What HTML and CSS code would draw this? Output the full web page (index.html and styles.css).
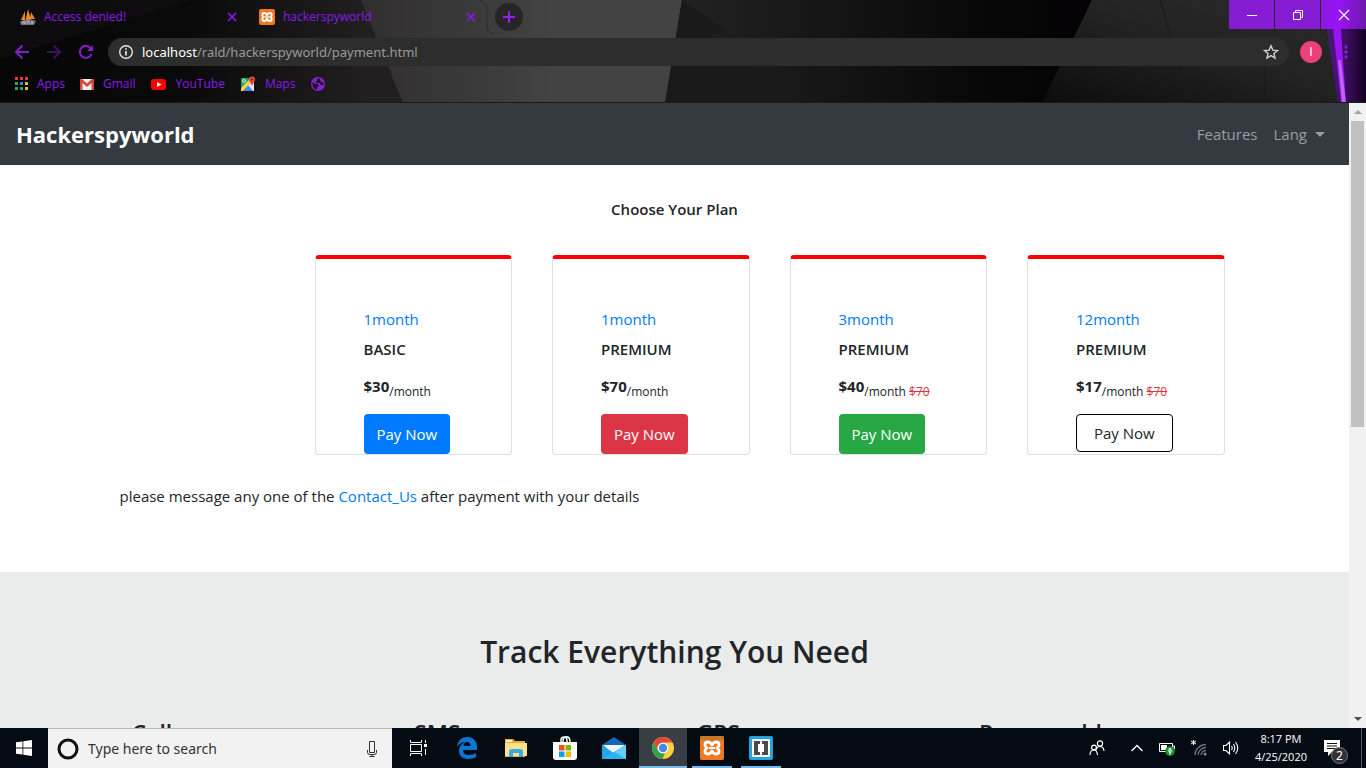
FILE: index.html
```html
<!DOCTYPE html>
<html lang="en">
<head>
<meta charset="utf-8">
<title>hackerspyworld</title>
<link rel="stylesheet" href="styles.css">
</head>
<body class="desktop">
<header class="browser">
  <svg class="theme" viewBox="0 0 1366 103" preserveAspectRatio="none" aria-hidden="true">
    <defs>
      <linearGradient id="base"><stop offset="0" stop-color="#070607"/><stop offset=".14" stop-color="#0b0a0b"/><stop offset=".27" stop-color="#211f20"/></linearGradient>
      <linearGradient id="mid"><stop offset="0" stop-color="#302e2f"/><stop offset=".6" stop-color="#434343"/><stop offset="1" stop-color="#434343"/></linearGradient>
      <linearGradient id="dark"><stop offset="0" stop-color="#222"/><stop offset=".7" stop-color="#080808"/><stop offset="1" stop-color="#040204"/></linearGradient>
      <linearGradient id="right" x1="0" y1="1" x2="1" y2="0"><stop offset="0" stop-color="#0c0c0c"/><stop offset=".5" stop-color="#222"/><stop offset="1" stop-color="#2c2c2c"/></linearGradient>
      <linearGradient id="glow"><stop offset="0" stop-color="#6b0fb5" stop-opacity="0"/><stop offset=".25" stop-color="#5a0d99" stop-opacity=".7"/><stop offset="1" stop-color="#150020"/></linearGradient>
    </defs>
    <rect width="1366" height="103" fill="url(#base)"/>
    <path d="M0 59L190 0H0Z" fill="#121112" opacity=".6"/>
    <path d="M361 0H682L665 103H403Z" fill="url(#mid)"/>
    <path d="M682 0H1100V103H665Z" fill="#1a1a1a"/>
    <path d="M684 0H1100V103H802L710 34H730L690 5Z" fill="url(#dark)"/>
    <path d="M1092 0H1366V103H1042Z" fill="url(#right)"/>
    <path d="M1160 0L1190 103M1265 66V103" stroke="#191919" fill="none"/>
    <path d="M1322 0H1366V103H1338Z" fill="url(#glow)"/>
    <path d="M1330 0H1339L1346 103H1341Z" fill="#9b12f5"/>
    <path d="M1338 60L1341 60L1346 103H1342Z" fill="#bd62f0"/>
    <path d="M479 0Q487 2 487 9V26Q487 33 494 34" fill="none" stroke="#2c2c2c"/>
    <path d="M0 102.500H1366" stroke="#1a1a1c"/>
  </svg>
  <div class="tabstrip">
    <div class="tab tab-first">
      <svg class="i16" viewBox="0 0 16 16" aria-hidden="true"><path d="M1 11L5 2V11ZM5.500 11L8 0L11 11ZM10 10L11 3L15 10Z" fill="#e88b25"/><path d="M0 12.500Q8 9 16 12L14 16H1Z" fill="#71717c"/><path d="M3 15V12L5 15V12M7 15V12H9V15M11 15L12 12L13 15" stroke="#c9c9d2" fill="none" stroke-width=".7"/></svg>
      <span class="tab-title">Access denied!</span>
      <button class="bare" aria-label="Close tab"><svg class="i10" viewBox="0 0 10 10"><path d="M1 1L9 9M9 1L1 9" stroke="#8a19ed" stroke-width="1.700"/></svg></button>
    </div>
    <div class="tab">
      <svg class="i16" viewBox="0 0 24 24" aria-hidden="true"><rect width="24" height="24" rx="3" fill="#f07823"/><path d="M12 9C10 5 5 5 5 9Q5 11 7 12Q5 13 5 15C5 19 10 19 12 15C14 19 19 19 19 15Q19 13 17 12Q19 11 19 9C19 5 14 5 12 9Z" fill="none" stroke="#fff" stroke-width="3" stroke-linejoin="round"/><path d="M9 12H15" stroke="#fff" stroke-width="2"/></svg>
      <span class="tab-title">hackerspyworld</span>
      <button class="bare" aria-label="Close tab"><svg class="i10" viewBox="0 0 10 10"><path d="M1 1L9 9M9 1L1 9" stroke="#8a19ed" stroke-width="1.700"/></svg></button>
    </div>
    <button class="newtab" aria-label="New tab"><svg class="i12" viewBox="0 0 12 12"><path d="M6 0V12M0 6H12" stroke="#9420f5" stroke-width="2"/></svg></button>
    <div class="winbtns">
      <button class="winbtn" aria-label="Minimize"><svg class="i12" viewBox="0 0 12 12"><path d="M1 6.500H11" stroke="#fff"/></svg></button>
      <button class="winbtn" aria-label="Restore"><svg class="i12" viewBox="0 0 12 12"><path d="M1.500 3.500H8.500V10.500H1.500ZM3.500 3.500V1.500H10.500V8.500H8.500" fill="none" stroke="#fff"/></svg></button>
      <button class="winbtn winbtn-close" aria-label="Close"><svg class="i12" viewBox="0 0 12 12"><path d="M1 1L11 11M11 1L1 11" stroke="#fff" stroke-width="1.200"/></svg></button>
    </div>
  </div>
  <div class="toolbar">
    <button class="bare" aria-label="Back"><svg class="i16" viewBox="0 0 16 16"><path d="M15 8H2M8.500 1.500L2 8L8.500 14.500" fill="none" stroke="#8220cf" stroke-width="2"/></svg></button>
    <button class="bare" aria-label="Forward"><svg class="i16" viewBox="0 0 16 16"><path d="M1 8H14M7.500 1.500L14 8L7.500 14.500" fill="none" stroke="#3c105c" stroke-width="2"/></svg></button>
    <button class="bare" aria-label="Reload"><svg class="i16" viewBox="0 0 16 16"><path d="M13.500 10A6 6 0 1 1 12.500 4" fill="none" stroke="#8220cf" stroke-width="2"/><path d="M15 1V7H9Z" fill="#8220cf"/></svg></button>
    <div class="omnibox">
      <svg class="i16" viewBox="0 0 16 16" aria-hidden="true"><circle cx="8" cy="8" r="6.300" fill="none" stroke="#e4e4e4" stroke-width="1.400"/><path d="M8 7V11.500M8 4.200V5.800" stroke="#e4e4e4" stroke-width="1.700"/></svg>
      <span class="url"><b class="host">localhost</b>/rald/hackerspyworld/payment.html</span>
      <button class="bare" aria-label="Bookmark this page"><svg class="i16" viewBox="0 0 16 16"><path d="M8 1.800L9.800 6.100L14.500 6.500L10.900 9.500L12 14L8 11.600L4 14L5.100 9.500L1.500 6.500L6.200 6.100Z" fill="none" stroke="#d0d0d0" stroke-width="1.400"/></svg></button>
    </div>
    <button class="avatar" aria-label="Profile">I</button>
    <button class="bare" aria-label="Menu"><svg class="i16" viewBox="0 0 16 16"><g fill="#8220cf"><circle cx="8" cy="3" r="1.700"/><circle cx="8" cy="8" r="1.700"/><circle cx="8" cy="13" r="1.700"/></g></svg></button>
  </div>
  <nav class="bookmarks" aria-label="Bookmarks">
    <a class="bookmark" href="#"><svg class="i14" viewBox="0 0 14 14" aria-hidden="true"><path d="M1 0H4V3H1ZM6 0H9V3H6ZM11 0H14V3H11Z" fill="#e53b30"/><path d="M1 5H4V8H1ZM1 10H4V13H1ZM6 10H9V13H6Z" fill="#31a552"/><path d="M6 5H9V8H6Z" fill="#3981ef"/><path d="M11 5H14V8H11ZM11 10H14V13H11Z" fill="#f6b80d"/></svg>Apps</a>
    <a class="bookmark" href="#"><svg class="i14" viewBox="0 0 14 14" aria-hidden="true"><path d="M0 2H14V13H0Z" fill="#eee"/><path d="M0 2H2L7 6.500L12 2H14V13H11.500V6L7 10L2.500 6V13H0Z" fill="#dc4437"/></svg>Gmail</a>
    <a class="bookmark" href="#"><svg class="i16" viewBox="0 0 16 16" aria-hidden="true"><rect x="0" y="3" width="15" height="11" rx="3" fill="#f00"/><path d="M6 6V11L10.500 8.500Z" fill="#fff"/></svg>YouTube</a>
    <a class="bookmark" href="#"><svg class="i16" viewBox="0 0 16 16" aria-hidden="true"><path d="M1 2H14V15H1Z" fill="#e8e8e8"/><path d="M1 2H11L1 13Z" fill="#1fa45b"/><path d="M2 15L8 9L13 15Z" fill="#3f87f5"/><path d="M1 12L10 3L12 5L3 15H1Z" fill="#fad33c"/><path d="M12 10C11 7 9 6 9 3.500A3 3 0 0 1 15 3.500C15 6 13 7 12 10Z" fill="#e5473a"/><circle cx="12" cy="3.500" r="1.100" fill="#7d1d18"/><circle cx="4" cy="5" r="1.500" fill="none" stroke="#fff" stroke-width=".8"/></svg>Maps</a>
    <a class="bookmark" href="#" aria-label="Website"><svg class="i16" viewBox="0 0 16 16"><circle cx="8" cy="8" r="7" fill="#8520d0"/><path d="M2.500 6L5 8H8L9 10L7 11V13.500C4 13 2 10 2.500 6ZM9 2L7 3.500V5.500H5.500L6 7H9.500L11 9H13.500V7L11 6L10 4Z" fill="#16111a"/></svg></a>
  </nav>
</header>
<div class="viewport">
  <main class="page">
    <nav class="navbar">
      <a class="brand" href="#">Hackerspyworld</a>
      <div class="navlinks"><a class="navlink" href="#">Features</a><button class="navlink dropdown">Lang <span class="caret"></span></button></div>
    </nav>
    <section class="plans">
      <h1 class="plans-title">Choose Your Plan</h1>
      <div class="cards">
        <article class="card"><a class="term" href="#">1month</a><h2 class="plan">BASIC</h2><p class="price"><b class="amount">$30</b><sub class="per">/month</sub></p><button class="pay pay-blue">Pay Now</button></article>
        <article class="card"><a class="term" href="#">1month</a><h2 class="plan">PREMIUM</h2><p class="price"><b class="amount">$70</b><sub class="per">/month</sub></p><button class="pay pay-red">Pay Now</button></article>
        <article class="card"><a class="term" href="#">3month</a><h2 class="plan">PREMIUM</h2><p class="price"><b class="amount">$40</b><sub class="per">/month <del class="old">$70</del></sub></p><button class="pay pay-green">Pay Now</button></article>
        <article class="card"><a class="term" href="#">12month</a><h2 class="plan">PREMIUM</h2><p class="price"><b class="amount">$17</b><sub class="per">/month <del class="old">$70</del></sub></p><button class="pay pay-outline">Pay Now</button></article>
      </div>
      <p class="note">please message any one of the <a class="link" href="#">Contact_Us</a> after payment with your details</p>
    </section>
    <section class="track">
      <h2 class="track-title">Track Everything You Need</h2>
      <div class="features"><h3 class="feature">Calls</h3><h3 class="feature">SMS</h3><h3 class="feature">GPS</h3><h3 class="feature">Recoverable</h3></div>
    </section>
  </main>
  <div class="scrollbar" aria-hidden="true"><span class="arrow arrow-up"></span><span class="thumb"></span><span class="arrow arrow-down"></span></div>
</div>
<footer class="taskbar">
  <button class="task" aria-label="Start"><svg class="i16" viewBox="0 0 16 16"><path d="M0 2.300L6.500 1.400V7.500H0ZM7.300 1.300L16 0V7.500H7.300ZM0 8.400H6.500V14.600L0 13.700ZM7.300 8.400H16V16L7.300 14.800Z" fill="#fff"/></svg></button>
  <label class="search"><svg class="i22" viewBox="0 0 22 22" aria-hidden="true"><circle cx="11" cy="11" r="9" fill="none" stroke="#111" stroke-width="3"/></svg><input class="search-input" type="text" placeholder="Type here to search" aria-label="Type here to search"><svg class="i16" viewBox="0 0 16 16" aria-hidden="true"><path d="M5.500 .5H10.500V11.500H5.500ZM3.500 9V11.500Q3.500 13.500 6 13.500H10Q12.500 13.500 12.500 11.500V9M8 13.500V15.500M5.500 15.500H10.500" fill="none" stroke="#333"/></svg></label>
  <div class="apps">
    <button class="task" aria-label="Task View"><svg class="i18" viewBox="0 0 18 18"><path d="M1.500 1V3.500H12.500V1M1.500 5.500H12.500V12.500H1.500ZM1.500 17V14.500H12.500V17M16.500 1V4M16.500 10V16" fill="none" stroke="#fff"/><path d="M15 5H18V8H15Z" fill="#fff"/></svg></button>
    <button class="task" aria-label="Edge"><svg class="i22" viewBox="0 0 22 22"><path d="M1 10C2 3 6 0 11 0C18 0 21 5 21 10V13H7C7 17 10 18 13 18C16 18 18 17 20 16V20C18 21 15 22 12 22C6 22 3 18 3 14C3 10 5 7 9 5C5 5 3 7 1 10ZM7.500 9H14.500C14.500 6.500 13 5 11 5C9 5 7.800 6.500 7.500 9Z" fill="#0878d8"/></svg></button>
    <button class="task" aria-label="File Explorer"><svg class="i22" viewBox="0 0 22 22"><path d="M0 2H8L10 4H20V20H0Z" fill="#e8ae3b"/><path d="M0 6H22V19H0Z" fill="#fde18c"/><path d="M1 3H7V5H1Z" fill="#fff1bd"/><path d="M4 20V15Q4 12 7 12H15Q18 12 18 15V20H14V16H8V20Z" fill="#3aace2"/></svg></button>
    <button class="task" aria-label="Microsoft Store"><svg class="i24" viewBox="0 0 24 24"><path d="M8 6V4Q8 1 11 1Q14 1 14 4V6M10 6V4Q11 0 15 1Q17 2 17 6" fill="none" stroke="#fff" stroke-width="1.400"/><path d="M0 6H24V21Q24 24 21 24H3Q0 24 0 21Z" fill="#fff"/><path d="M6 9H11.500V14.500H6Z" fill="#f25022"/><path d="M12.500 9H18V14.500H12.500Z" fill="#7fba00"/><path d="M6 15.500H11.500V21H6Z" fill="#00a4ef"/><path d="M12.500 15.500H18V21H12.500Z" fill="#ffb900"/></svg></button>
    <button class="task" aria-label="Mail"><svg class="i24" viewBox="0 0 24 24"><path d="M0 9L12 1L24 9V23H0Z" fill="#1068b8"/><path d="M1 9H23L12 19Z" fill="#f1f3f5"/><path d="M0 9L13 18L10 23H0Z" fill="#25a5e8"/><path d="M24 9V23H0L12 16Z" fill="#2bb5f2"/><path d="M24 9V23L13 16Z" fill="#62cffb"/></svg></button>
    <button class="task task-active" aria-label="Google Chrome"><svg class="i22" viewBox="0 0 22 22"><circle cx="11" cy="11" r="11" fill="#fdd23d"/><path d="M1.500 5.500A11 11 0 0 1 20.500 5.500H11A5.500 5.500 0 0 0 6.200 13.700Z" fill="#df493b"/><path d="M1.500 5.500L6.200 13.700A5.500 5.500 0 0 0 13 16L10.500 22A11 11 0 0 1 1.500 5.500Z" fill="#30a151"/><circle cx="11" cy="11" r="5.300" fill="#fff"/><circle cx="11" cy="11" r="4.200" fill="#4687ee"/></svg></button>
    <button class="task task-open" aria-label="XAMPP"><svg class="i24" viewBox="0 0 24 24"><rect width="24" height="24" rx="2" fill="#f07823"/><path d="M0 2Q0 0 2 0H22Q24 0 24 2V4H0Z" fill="#c9762f"/><path d="M12 9C10 5 5 5 5 9Q5 11 7 12Q5 13 5 15C5 19 10 19 12 15C14 19 19 19 19 15Q19 13 17 12Q19 11 19 9C19 5 14 5 12 9Z" fill="none" stroke="#fff" stroke-width="2.800" stroke-linejoin="round"/><path d="M9 12H15" stroke="#fff" stroke-width="2"/></svg></button>
    <button class="task task-open" aria-label="Brackets"><svg class="i24" viewBox="0 0 24 24"><rect width="24" height="24" rx="2" fill="#23a4df"/><path d="M3 3H21V21H3Z" fill="#fff"/><path d="M5 5H11V8H9V16H11V19H5ZM13 5H19V19H13V16H15V8H13Z" fill="#4a4b4d"/></svg></button>
  </div>
  <div class="tray">
    <button class="bare people" aria-label="People"><svg class="i16" viewBox="0 0 16 16"><path d="M1 15Q1 10 5 10Q8 10 8.500 15M7 10Q8 6.500 11 6.500Q14.500 6.500 15 11" fill="none" stroke="#fff" stroke-width="1.200"/><circle cx="5" cy="7.500" r="2.400" fill="none" stroke="#fff" stroke-width="1.200"/><circle cx="11" cy="3.500" r="2.600" fill="none" stroke="#fff" stroke-width="1.200"/></svg></button>
    <button class="bare" aria-label="Show hidden icons"><svg class="i12" viewBox="0 0 12 12"><path d="M.5 9L6 3.500L11.500 9" fill="none" stroke="#fff" stroke-width="1.400"/></svg></button>
    <button class="bare" aria-label="Battery"><svg class="i16" viewBox="0 0 16 16"><path d="M.5 3.500H13.500V11.500H.5ZM14 6H15.500V9" fill="none" stroke="#fff"/><path d="M2 5H8V10H2Z" fill="#fff"/><circle cx="11" cy="11" r="4.800" fill="#16982f"/><path d="M11 8Q14 11 11 13Q8 11 11 8ZM11 10V15" fill="none" stroke="#fff"/></svg></button>
    <button class="bare" aria-label="Network"><svg class="i16" viewBox="0 0 16 16"><path d="M4 15A11 11 0 0 1 15 4.500M7 15A8 8 0 0 1 15 7.500M10 15A5 5 0 0 1 15 10.500" fill="none" stroke="#6d7075" stroke-width="1.300"/><circle cx="14" cy="14" r="1.500" fill="#8b8e91"/><path d="M2.500 0V5M0 1L5 4M5 1L0 4" stroke="#fff"/></svg></button>
    <button class="bare" aria-label="Volume"><svg class="i16" viewBox="0 0 16 16"><path d="M.5 5.500H3L6.500 2V14L3 10.500H.5ZM8.500 6Q10 8 8.500 10M10.500 4Q13 8 10.500 12M12.500 2Q17 8 12.500 14" fill="none" stroke="#fff" stroke-width="1.100"/></svg></button>
    <time class="clock"><span>8:17 PM</span><span>4/25/2020</span></time>
    <button class="bare notice" aria-label="Notifications, 2 new"><svg class="i18" viewBox="0 0 18 18"><path d="M1 1H17V13H9L5 17V13H1Z" fill="#fff"/><path d="M4 4.500H14M4 7H14M4 9.500H14" stroke="#111"/></svg><span class="count">2</span></button>
    <button class="show-desktop" aria-label="Show desktop"></button>
  </div>
</footer>
</body>
</html>
```

FILE: styles.css
```css
* { box-sizing: border-box; }
svg { display: block; flex: none; }
button, input { font: inherit; color: inherit; }
button { border: 0; background: none; padding: 0; }
a { text-decoration: none; color: inherit; }
h1, h2, h3, p { margin: 0; }
.desktop { margin: 0; height: 100vh; overflow: hidden; display: flex; flex-direction: column; font-family: "Open Sans", "Noto Sans", sans-serif; font-size: 15px; line-height: 24px; color: #212529; }
.i10 { width: 10px; height: 10px; }
.i12 { width: 12px; height: 12px; }
.i14 { width: 14px; height: 14px; }
.i16 { width: 16px; height: 16px; }
.i18 { width: 18px; height: 18px; }
.i22 { width: 22px; height: 22px; }
.i24 { width: 24px; height: 24px; }

/* Browser frame */
.browser { position: relative; isolation: isolate; flex: none; height: 103px; color: #8a19ed; font-size: 12px; }
.theme { position: absolute; inset: 0; width: 100%; height: 100%; z-index: -1; }
.bare { display: flex; align-items: center; justify-content: center; }
.tabstrip { display: flex; align-items: center; height: 34px; padding-left: 20px; }
.tab { display: flex; align-items: center; width: 239px; padding-right: 22px; }
.tab .bare { margin-left: auto; }
.tab-title { margin-left: 8px; }
.newtab { width: 28px; height: 28px; border-radius: 50%; background: #262626; display: grid; place-items: center; margin-left: -3px; }
.winbtns { display: flex; gap: 1px; margin-left: auto; align-self: flex-start; }
.winbtn { width: 45px; height: 29px; display: grid; place-items: center; background: #861bd4; }
.winbtn-close { background: linear-gradient(90deg, #8d18e2, #9714f5 40%, #6f18aa); }
.toolbar { display: flex; align-items: center; height: 36px; padding: 0 12px 0 14px; gap: 16px; }
.omnibox { flex: 1; height: 28px; border-radius: 14px; background: #2d2d2d; display: flex; align-items: center; padding: 0 10px; margin: 0 -5px 0 -2px; color: #9a9a9a; font-family: "Noto Sans", sans-serif; font-size: 13px; }
.url { flex: 1; margin-left: 8px; }
.host { font-weight: 400; color: #fff; }
.avatar { width: 22px; height: 22px; border-radius: 50%; background: #ec407a; color: #fff; font-family: "Liberation Sans", sans-serif; font-size: 12px; line-height: 22px; }
.bookmarks { display: flex; align-items: center; gap: 15px; height: 28px; padding-left: 14px; }
.bookmark { display: flex; align-items: center; gap: 9px; }

/* Page content */
.viewport { flex: 1; min-height: 0; display: flex; overflow: hidden; background: #fff; }
.page { flex: 1; min-width: 0; overflow: hidden; }
.navbar { display: flex; align-items: center; justify-content: space-between; height: 62px; padding: 0 24px 0 16px; background: #343a40; color: #9a9da0; }
.brand { color: #fff; font-size: 22px; font-weight: 700; line-height: 32px; }
.navlinks { display: flex; gap: 16px; }
.dropdown { display: flex; align-items: center; gap: 8px; }
.caret { border: 5px solid transparent; border-top-color: currentColor; border-bottom: 0; }
.plans { max-width: 1110px; margin: 0 auto; padding: 32px 0 64px; }
.plans-title { text-align: center; font-size: 15px; font-weight: 600; line-height: 24px; }
.cards { display: grid; grid-template-columns: repeat(4, 1fr); gap: 40px; margin-top: 34px; padding: 0 5px 0 195px; }
.card { height: 200px; border: 1px solid #dfdfdf; border-top: 4px solid red; border-radius: 4px; padding: 48px 0 0 48px; }
.term { display: block; color: #007bff; }
.plan { margin-top: 6px; font-size: 15px; font-weight: 600; line-height: 24px; }
.price { margin-top: 13px; height: 24px; white-space: nowrap; }
.amount { font-weight: 700; }
.per { font-size: 12px; line-height: 12px; }
.old { color: #dc3545; }
.pay { display: block; margin-top: 16px; height: 40px; padding: 0 13px; border-radius: 4px; color: #fff; }
.pay-blue { background: #007bff; }
.pay-red { background: #dc3545; }
.pay-green { background: #28a745; }
.pay-outline { height: 38px; padding: 0 17px; border: 1px solid #000; background: #fff; color: #212529; }
.note { margin-top: 29px; }
.link { color: #007bff; }
.track { background: #eaeceb; padding-top: 60px; height: 400px; }
.track-title { text-align: center; font-size: 30px; font-weight: 600; line-height: 40px; }
.features { display: grid; grid-template-columns: repeat(4, 1fr); max-width: 1130px; margin: 45px auto 0; }
.feature { padding-left: 22px; font-size: 23px; font-weight: 600; line-height: 32px; }
.scrollbar { width: 17px; flex: none; background: #f1f1f1; display: flex; flex-direction: column; align-items: center; }
.arrow { margin: 7px 0; border: 4px solid transparent; }
.arrow-up { border-top: 0; border-bottom-color: #a3a3a3; }
.arrow-down { border-bottom: 0; border-top-color: #505050; margin-top: auto; }
.thumb { width: 13px; height: 49%; background: #c1c1c1; }

/* Taskbar */
.taskbar { flex: none; height: 40px; display: flex; background: #050b13; color: #fff; font-family: "Noto Sans", sans-serif; }
.task { width: 48px; height: 40px; display: grid; place-items: center; border-bottom: 2px solid transparent; border-top: 2px solid transparent; }
.task-active { background: #393e44; border-color: #393e44; border-bottom-color: #76b9ed; }
.task-open { width: 40px; margin: 0 4px; border-bottom-color: #76b9ed; }
.search { display: flex; align-items: center; width: 344px; padding: 0 12px 0 9px; background: #f2f2f2; border-top: 1px solid #b7b7b7; color: #333; font-size: 14px; }
.search-input { flex: 1; min-width: 0; border: 0; outline: 0; padding: 0 0 0 9px; background: none; }
.search-input::placeholder { color: #333; opacity: 1; }
.apps { display: flex; gap: 1px; padding-left: 2px; }
.tray { display: flex; align-items: center; gap: 16px; margin-left: auto; }
.people { margin-right: 10px; }
.clock { display: flex; flex-direction: column; text-align: center; font-family: "Open Sans", sans-serif; font-size: 11px; line-height: 18px; }
.notice { position: relative; margin-right: 4px; }
.count { position: absolute; left: 8px; top: 8px; width: 17px; height: 17px; border: 1px solid #777; border-radius: 50%; background: #303237; font-size: 12px; line-height: 15px; }
.show-desktop { width: 5px; height: 40px; border-left: 1px solid #555a60; }
```
